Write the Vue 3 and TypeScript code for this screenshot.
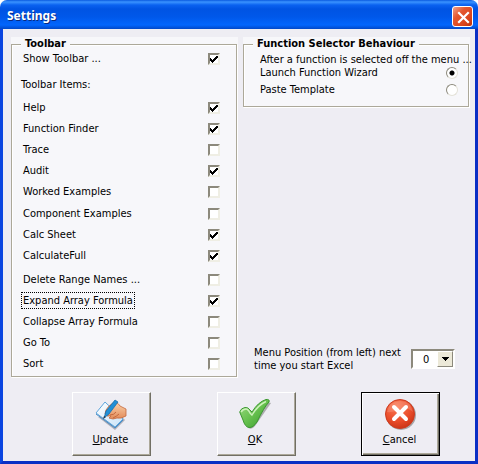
<script setup lang="ts">
import { reactive, ref } from 'vue'

interface ToolbarItem {
  id: string
  label: string
  checked: boolean
}

const showToolbar = ref(true)
const behaviour = ref<'launch' | 'paste'>('launch')
const menuPosition = ref(0)
const focusedId = ref('expand')

const groups = reactive<ToolbarItem[][]>([
  [
    { id: 'help', label: 'Help', checked: true },
    { id: 'finder', label: 'Function Finder', checked: true },
    { id: 'trace', label: 'Trace', checked: false },
    { id: 'audit', label: 'Audit', checked: true },
    { id: 'worked', label: 'Worked Examples', checked: false },
  ],
  [
    { id: 'component', label: 'Component Examples', checked: false },
    { id: 'calc', label: 'Calc Sheet', checked: true },
    { id: 'full', label: 'CalculateFull', checked: true },
  ],
  [
    { id: 'delete', label: 'Delete Range Names ...', checked: false },
    { id: 'expand', label: 'Expand Array Formula', checked: true },
    { id: 'collapse', label: 'Collapse Array Formula', checked: false },
    { id: 'goto', label: 'Go To', checked: false },
    { id: 'sort', label: 'Sort', checked: false },
  ],
])
</script>

<template>
  <main class="window">
    <header class="titlebar">
      <h1 class="title">Settings</h1>
      <button class="close" type="button" aria-label="Close">
        <svg viewBox="0 0 21 21" width="21" height="21">
          <path d="M6 6 L15 15 M15 6 L6 15" stroke="#fff" stroke-width="2.2" stroke-linecap="square" />
        </svg>
      </button>
    </header>

    <form class="body" @submit.prevent>
      <div class="columns">
        <div class="panel">
          <fieldset class="group toolbar-group">
            <legend>Toolbar</legend>
            <label class="row first">
              <span class="text">Show Toolbar ...</span>
              <input v-model="showToolbar" type="checkbox" class="check" />
            </label>
            <p class="subhead">Toolbar Items:</p>
            <div class="lists">
              <div v-for="(group, i) in groups" :key="i" class="list">
                <label v-for="item in group" :key="item.id" class="row">
                  <span class="text" :class="{ focused: item.id === focusedId }">{{ item.label }}</span>
                  <input v-model="item.checked" type="checkbox" class="check" @focus="focusedId = item.id" />
                </label>
              </div>
            </div>
          </fieldset>
        </div>

        <div class="side">
          <div class="panel">
            <fieldset class="group choice-group">
              <legend>Function Selector Behaviour</legend>
              <p class="hint">After a function is selected off the menu ...</p>
              <label class="choice">
                <span>Launch Function Wizard</span>
                <input v-model="behaviour" type="radio" name="behaviour" value="launch" class="radio" />
              </label>
              <label class="choice">
                <span>Paste Template</span>
                <input v-model="behaviour" type="radio" name="behaviour" value="paste" class="radio" />
              </label>
            </fieldset>
          </div>

          <div class="position">
            <label for="menu-position">Menu Position (from left) next<br />time you start Excel</label>
            <div class="combo">
              <select id="menu-position" v-model="menuPosition">
                <option v-for="n in 10" :key="n" :value="n - 1">{{ n - 1 }}</option>
              </select>
              <span class="arrow" aria-hidden="true">
                <svg viewBox="0 0 7 4" width="7" height="4" shape-rendering="crispEdges">
                  <path d="M0 0H7V1H6V2H5V3H4V4H3V3H2V2H1V1H0Z" />
                </svg>
              </span>
            </div>
          </div>
        </div>
      </div>

      <div class="actions">
        <button type="button" class="action">
          <svg viewBox="0 0 32 32" width="32" height="32" aria-hidden="true">
            <defs>
              <linearGradient id="paper" x1="0" y1="0" x2="1" y2="1">
                <stop offset="0" stop-color="#ffffff" />
                <stop offset="1" stop-color="#c9e3f8" />
              </linearGradient>
              <linearGradient id="skin" x1="0" y1="0" x2="0" y2="1">
                <stop offset="0" stop-color="#fbd3ac" />
                <stop offset="1" stop-color="#e28a58" />
              </linearGradient>
            </defs>
            <path d="M3 19 L20 32 L30 22 L26 18 Z" fill="#6b7280" opacity=".5" />
            <path d="M1 15 L10 4 L28 21 L20 29 Z" fill="url(#paper)" stroke="#5fa6dc" stroke-linejoin="round" />
            <path d="M1 16 L20 30 L28 22" fill="none" stroke="#4a8cc4" />
            <path d="M10 16 Q10 12 14 8 L18 5 Q22 3 25 8 L31 11 L31 18 Q26 21 22 20 L18 21 L14 20 L16 18 L12 18 Z" fill="url(#skin)" stroke="#c4683c" stroke-width=".8" />
            <path d="M15 17 Q19 17 21 14 M18 20 Q22 18 24 16" fill="none" stroke="#c4683c" stroke-width="1" />
            <path d="M9 20 L11 13 L20 2 L23 4 L14 16 Z" fill="#2290d6" stroke="#1068a8" stroke-width=".7" />
            <path d="M8 21 L9 18 L11 19 Z" fill="#26394d" />
          </svg>
          <span><u>U</u>pdate</span>
        </button>
        <button type="button" class="action">
          <svg viewBox="0 0 32 32" width="32" height="32" aria-hidden="true">
            <defs>
              <linearGradient id="green" x1="0" y1="0" x2="1" y2="1">
                <stop offset="0" stop-color="#a0dd85" />
                <stop offset=".5" stop-color="#66c04e" />
                <stop offset="1" stop-color="#35982a" />
              </linearGradient>
            </defs>
            <path d="M8 29 Q12 33 16 28 L32 5 L28 4 Z" fill="#777" opacity=".55" />
            <path d="M0.7 14 Q2 10 6 9.500 Q9 9 11 12 L13 14 Q19 4 27 1.500 Q31 1 30 4 Q25 9 18 24 Q14 30 10 29.500 Q6 29 4 22 Z" fill="url(#green)" stroke="#3b9730" />
            <path d="M2 14 Q4 11 7 11 Q9 11 11 15 L13 17 Q19 7 27 3.500" fill="none" stroke="#cdf2bb" stroke-width="1.4" />
          </svg>
          <span><u>O</u>K</span>
        </button>
        <button type="submit" class="action default">
          <svg viewBox="0 0 32 32" width="32" height="32" aria-hidden="true">
            <defs>
              <radialGradient id="red" cx=".4" cy=".25" r=".8">
                <stop offset="0" stop-color="#fa7b56" />
                <stop offset=".6" stop-color="#ea4e2b" />
                <stop offset="1" stop-color="#c93215" />
              </radialGradient>
            </defs>
            <circle cx="17" cy="17" r="15" fill="#777" opacity=".6" />
            <circle cx="16" cy="16" r="14.5" fill="url(#red)" stroke="#cc3c20" />
            <path d="M3 14 Q5 3 16 3 Q27 3 29 14 Q22 8 16 11 Q10 15 3 14Z" fill="#fff" opacity=".16" />
            <path d="M10 9 L22 21 M22 9 L10 21" stroke="#fff" stroke-width="4" stroke-linecap="round" />
          </svg>
          <span><u>C</u>ancel</span>
        </button>
      </div>
    </form>
  </main>
</template>

<style>
body {
  margin: 0;
  background: #fff;
}
</style>

<style scoped>
* {
  box-sizing: border-box;
}

.window {
  min-height: 100vh;
  display: flex;
  flex-direction: column;
  overflow: hidden;
  border-radius: 7px 7px 0 0;
  background: #eeedf3;
  color: #000;
  font-family: "DejaVu Sans Condensed", "DejaVu Sans", sans-serif;
  font-size: 11px;
  line-height: 13px;
}

.titlebar {
  height: 29px;
  display: flex;
  align-items: center;
  justify-content: space-between;
  padding: 3px 5px 0 7px;
  background: linear-gradient(#0a5ae0 0, #3a93ff 2px, #0a62f0 5px, #0054e3 9px, #0058ea 17px, #0266fd 25px, #0148c8 29px);
}

.title {
  margin: 0;
  color: #fff;
  font-family: "Noto Sans", sans-serif;
  font-size: 12px;
  font-weight: 700;
  line-height: 18px;
  text-shadow: 1px 1px 0 #0a2a80;
}

.close {
  width: 21px;
  height: 21px;
  padding: 0;
  display: grid;
  place-items: center;
  border: 1px solid #fff;
  border-radius: 3px;
  background: linear-gradient(135deg, #f0a28c, #e4572f 35%, #d8431b 75%, #b93209);
}

.body {
  flex: 1;
  display: flex;
  flex-direction: column;
  gap: 14px;
  padding: 8px 5px 5px 8px;
  border: solid #0a45e0;
  border-width: 0 3px 3px;
  border-right-color: #0a2fc4;
  border-bottom-color: #0a2fc4;
}

.columns {
  display: grid;
  grid-template-columns: minmax(0, 1fr) minmax(0, 1fr);
  gap: 5px;
}

.panel {
  padding: 0 1px 1px 0;
  background: #f7f7fa;
}

.group {
  min-width: 0;
  margin: 0;
  padding: 0;
  border: 1px solid #aca899;
  box-shadow: 1px 1px 0 #fff, inset 1px 1px 0 #fff;
}

legend {
  padding: 0 4px;
  background: #f7f7fa;
  font-weight: 700;
  line-height: 14px;
}

.toolbar-group {
  padding: 0 16px 2px 9px;
}

.row {
  height: 21px;
  display: flex;
  align-items: center;
  justify-content: space-between;
}

.row.first {
  height: 15px;
}

.text {
  padding: 1px;
  border: 1px solid transparent;
  white-space: nowrap;
}

.text.focused {
  border: 1px dotted #000;
}

.subhead {
  margin: 12px 0 6px;
}

.lists {
  display: grid;
}

.list + .list {
  margin-top: 1px;
}

.list:last-child {
  margin-top: 3px;
}

.check {
  appearance: none;
  width: 12px;
  height: 12px;
  margin: 0;
  border: 2px solid;
  border-color: #8c897c #efeee4 #efeee4 #8c897c;
  background: #fff;
  outline: none;
}

.check:checked {
  background: #fff url("data:image/svg+xml,%3Csvg xmlns='http://www.w3.org/2000/svg' viewBox='0 0 8 8' shape-rendering='crispEdges'%3E%3Cpath d='M0 3h1v1h1v1h1v-1h1v-1h1v-1h1v-1h2v2h-1v1h-1v1h-1v1h-1v1h-1v1h-1v-1h-1v-1h-1z'/%3E%3C/svg%3E") center / 8px 8px no-repeat;
}

.side {
  display: flex;
  flex-direction: column;
  justify-content: space-between;
  padding-bottom: 6px;
}

.choice-group {
  padding: 2px 10px 10px 16px;
}

.choice-group legend {
  margin-left: -7px;
}

.hint {
  margin: 0;
  white-space: nowrap;
}

.choice {
  display: flex;
  align-items: center;
  justify-content: space-between;
}

.choice + .choice {
  margin-top: 4px;
}

.radio {
  appearance: none;
  width: 12px;
  height: 12px;
  margin: 0;
  border: 1px solid;
  border-color: #8c897c #e4e2d8 #e4e2d8 #8c897c;
  border-radius: 50%;
  background: #fff;
}

.radio:checked {
  background: radial-gradient(circle, #000 2px, #fff 3px);
}

.position {
  display: flex;
  align-items: center;
  justify-content: space-between;
  padding: 0 15px 0 11px;
  white-space: nowrap;
}

.combo {
  width: 44px;
  height: 20px;
  display: grid;
  grid-template-columns: 1fr 16px;
  border: 2px solid;
  border-color: #8c897c #fff #fff #8c897c;
  background: #fff;
}

.combo select {
  grid-area: 1 / 1 / 2 / 3;
  appearance: none;
  padding: 0 0 0 10px;
  border: 0;
  background: transparent;
  font: inherit;
}

.arrow {
  grid-area: 1 / 2;
  display: grid;
  place-items: center;
  border: 1px solid;
  border-color: #fff #8c897c #8c897c #fff;
  background: #ece9d8;
  pointer-events: none;
}

.actions {
  display: flex;
  justify-content: space-between;
  padding: 0 30px 0 61px;
}

.action {
  width: 79px;
  height: 64px;
  padding: 0 2px 4px 0;
  display: flex;
  flex-direction: column;
  align-items: center;
  justify-content: center;
  gap: 3px;
  border: 1px solid;
  border-color: #fff #716f64 #716f64 #fff;
  box-shadow: inset -1px -1px 0 #aca899;
  background: #eeedf3;
  color: #000;
  font: inherit;
}

.action.default {
  border-color: #000;
  box-shadow: inset 1px 1px 0 #fff, inset -1px -1px 0 #716f64, inset -2px -2px 0 #aca899;
}
</style>
